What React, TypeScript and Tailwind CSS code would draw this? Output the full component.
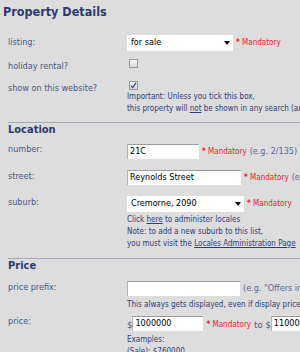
import React from 'react';

const labelCls = 'w-[119px] shrink-0 text-[9px] leading-[12px] text-[#4a5783]';
const noteCls = 'text-[8px] leading-[12px] text-[#2e3c7c] whitespace-nowrap';

const Mandatory = () => (
  <span className="ml-[3px] whitespace-nowrap text-[8px] text-[#ee2229]">
    <span className="font-bold">*</span> Mandatory
  </span>
);

const Example = ({ text }: { text: string }) => (
  <span className="ml-[3px] whitespace-nowrap text-[9px] text-[#5b6794]">{text}</span>
);

const TextBox = ({ width, value }: { width: string; value?: string }) => (
  <div
    className={`flex h-[15px] shrink-0 items-center border-t border-l border-t-[#9c9c9c] border-l-[#b4b4b4] bg-white pl-[2px] text-[9px] text-black ${width}`}
  >
    {value}
  </div>
);

const Select = ({ width, value }: { width: string; value: string }) => (
  <div className={`flex h-[16px] shrink-0 items-center justify-between bg-white pl-[4px] pr-[3px] text-[9px] text-black ${width}`}>
    <span>{value}</span>
    <span className="h-0 w-0 border-x-[3px] border-t-[4px] border-x-transparent border-t-black" />
  </div>
);

const Checkbox = ({ checked }: { checked?: boolean }) => (
  <span className="ml-[2px] flex h-[9px] w-[9px] items-center justify-center border border-[#979797] bg-linear-to-b from-[#f6f6f6] to-[#d8d8d8]">
    {checked && (
      <svg width="7" height="7" viewBox="0 0 7 7">
        <path d="M1 3.6 L2.7 5.6 L6 0.8" stroke="#2a3a9c" strokeWidth="1.2" fill="none" />
      </svg>
    )}
  </span>
);

const Row = ({ label, className, labelOffset, children }: { label: string; className: string; labelOffset?: string; children: React.ReactNode }) => (
  <div className={`flex items-start ${className}`}>
    <div className={`${labelCls} ${labelOffset ?? ''}`}>{label}</div>
    <div className="min-w-0 flex-1">{children}</div>
  </div>
);

const Section = ({ title }: { title: string }) => (
  <h2 className="text-[11px] font-bold leading-[14px] text-[#2c3a6c]">{title}</h2>
);

const App = () => {
  return (
    <div className="h-[352px] w-[300px] overflow-hidden bg-[#dddddd] font-['DejaVu_Sans_Condensed','Liberation_Sans',sans-serif]">
      <h1 className="pl-[3px] pt-[3px] text-[12.5px] font-bold leading-[18px] text-[#2c3a6c]">Property Details</h1>

      <div className="pl-[8px]">
        {/* Property details */}
        <Row label="listing:" className="mt-[14px]" labelOffset="pt-[1px]">
          <div className="flex items-center">
            <Select width="w-[106px]" value="for sale" />
            <Mandatory />
          </div>
        </Row>

        <Row label="holiday rental?" className="mt-[8px]" labelOffset="pt-[1px]">
          <Checkbox />
        </Row>

        <Row label="show on this website?" className="mt-[9px]" labelOffset="pt-[1px]">
          <Checkbox checked />
          <p className={`mt-[1px] ${noteCls} leading-[11px]`}>Important: Unless you tick this box,</p>
          <p className={`${noteCls} leading-[11px]`}>
            this property will <span className="underline">not</span> be shown in any search (and
          </p>
        </Row>

        <div className="mt-[7px] h-[1px] bg-[#a4a6b8]" />

        {/* Location */}
        <Section title="Location" />

        <Row label="number:" className="mt-[7px]" labelOffset="-mt-[1px]">
          <div className="flex items-center">
            <TextBox width="w-[72px]" value="21C" />
            <Mandatory />
            <Example text="(e.g. 2/135)" />
          </div>
        </Row>

        <Row label="street:" className="mt-[11px]">
          <div className="flex items-center">
            <TextBox width="w-[114px]" value="Reynolds Street" />
            <Mandatory />
            <Example text="(e.g. Smith Street)" />
          </div>
        </Row>

        <Row label="suburb:" className="mt-[11px]">
          <div className="flex items-center">
            <Select width="w-[117px]" value="Cremorne, 2090" />
            <Mandatory />
          </div>
          <p className={`mt-[2px] ${noteCls}`}>
            Click <span className="underline">here</span> to administer locales
          </p>
          <p className={noteCls}>Note: to add a new suburb to this list,</p>
          <p className={noteCls}>
            you must visit the <span className="underline">Locales Administration Page</span>
          </p>
        </Row>

        <div className="mt-[8px] h-[1px] bg-[#a4a6b8]" />

        {/* Price */}
        <Section title="Price" />

        <Row label="price prefix:" className="mt-[8px]">
          <div className="flex items-center">
            <TextBox width="w-[113px]" />
            <Example text={'(e.g. "Offers invited")'} />
          </div>
          <p className={`mt-[3px] ${noteCls}`}>This always gets displayed, even if display price is unticked</p>
        </Row>

        <Row label="price:" className="mt-[4px]">
          <div className="flex h-[16px] items-end">
            <span className="text-[9.5px] leading-[12px] text-[#4a5783]">$</span>
            <TextBox width="w-[71px]" value="1000000" />
            <Mandatory />
            <span className="ml-[3px] whitespace-nowrap text-[9.5px] leading-[12px] text-[#4a5783]">to $</span>
            <TextBox width="w-[80px]" value="1100000" />
          </div>
          <p className={`mt-[3px] ${noteCls} leading-[10px]`}>Examples:</p>
          <p className={`${noteCls} leading-[10px]`}>(Sale): $760000</p>
        </Row>
      </div>
    </div>
  );
};

export default App;
